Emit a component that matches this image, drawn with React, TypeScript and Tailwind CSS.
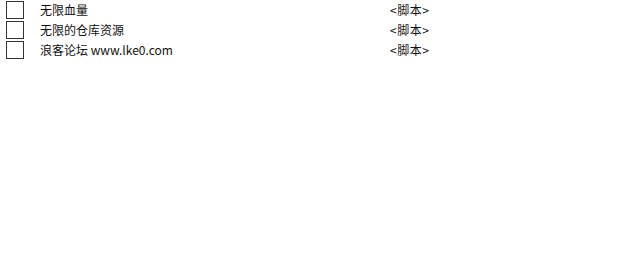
const ROWS = ["无限血量", "无限的仓库资源", "浪客论坛 www.lke0.com"];

export default function App() {
  return (
    <div
      className="h-[278px] w-[629px] bg-white text-[12px] text-[#111]"
      style={{ fontFamily: '"Noto Sans CJK SC", sans-serif' }}
    >
      {ROWS.map((name) => (
        <div key={name} className="flex h-[20px] items-center">
          <div className="ml-[6px] h-[18px] w-[18px] border border-[#333]" />
          <span className="ml-[16px] w-[350px] leading-none">{name}</span>
          <span className="leading-none tracking-[0.5px]">&lt;脚本&gt;</span>
        </div>
      ))}
    </div>
  );
}
